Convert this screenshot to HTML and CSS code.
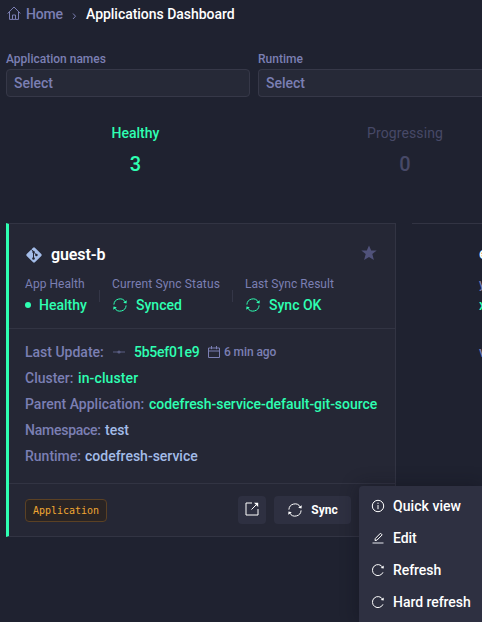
FILE: index.html
```html
<!DOCTYPE html>
<html lang="en">
<head>
<meta charset="utf-8">
<title>Applications Dashboard</title>
<link rel="stylesheet" href="styles.css">
</head>
<body>
<svg class="defs" aria-hidden="true">
  <symbol id="sync" viewBox="0 0 14 14"><path d="M.9 6.600A6.100 6.100 0 0 1 12.300 4M13.100 7.400A6.100 6.100 0 0 1 1.700 10"/><path class="head" d="m10.200 4.700 3.300.9.300-3.300zM3.800 9.300.5 8.400l-.3 3.300z"/></symbol>
  <symbol id="refresh" viewBox="0 0 14 14"><path d="M12 9.300a5.500 5.500 0 1 1-.3-5"/><path class="head" d="m9.700 4.900 3 .6V2.600z"/></symbol>
</svg>
<nav class="crumbs">
  <svg class="home" viewBox="0 0 14 14"><path d="M.6 7.500 7 1l6.400 6.500M2.500 6v7.400h9V6M5.500 13V9h3v4"/></svg>
  <a class="home-link">Home</a>
  <svg class="chevron" viewBox="0 0 5 8"><path d="m1 1.500 2.500 2.700L1 7"/></svg>
  <b class="current">Applications Dashboard</b>
</nav>
<section class="filters">
  <div class="field"><label>Application names</label><div class="select">Select</div></div>
  <div class="field"><label>Runtime</label><div class="select">Select</div></div>
</section>
<section class="stats">
  <div class="stat ok"><span>Healthy</span><b>3</b></div>
  <div class="stat off"><span>Progressing</span><b>0</b></div>
</section>
<main class="cards">
  <article class="card">
    <header class="top">
      <div class="title">
        <svg class="git" viewBox="0 0 16 16"><path class="gem" d="M8 .3q.5 0 .9.400l6.400 6.400q.8.900 0 1.800l-6.400 6.400q-.9.800-1.800 0L.7 8.900q-.8-.9 0-1.800L7.100.7Q7.500.3 8 .3z"/><path class="branch" d="M5.500 2.500 7.500 4.800v7M7.800 5.200l2.500 2.600"/><circle cx="7.500" cy="5" r="1.200"/><circle cx="10.400" cy="8" r="1.300"/><circle cx="7.500" cy="11.500" r="1.300"/></svg>
        <h2>guest-b</h2>
        <svg class="star" viewBox="0 0 16 16"><path d="m8 .5 2.200 5h5.500l-4.400 3.600 1.600 5.900L8 11.900 3.100 15l1.600-5.900L.3 5.500h5.500z"/></svg>
      </div>
      <div class="states">
        <div class="state s1"><span class="cap">App Health</span><div class="val"><i class="dot"></i><b>Healthy</b></div></div>
        <div class="state s2"><span class="cap wide">Current Sync Status</span><div class="val"><svg class="ic"><use href="#sync"/></svg><b>Synced</b></div></div>
        <div class="state s3"><span class="cap">Last Sync Result</span><div class="val"><svg class="ic"><use href="#sync"/></svg><b>Sync OK</b></div></div>
      </div>
    </header>
    <div class="details">
      <div class="row"><span class="key k1">Last Update:</span><svg class="commit" viewBox="0 0 12 6"><path d="M0 3h12"/><circle cx="6" cy="3" r="1.600"/></svg><b class="hash">5b5ef01e9</b><svg class="cal" viewBox="0 0 12 12"><path d="M.5 2h11v9.500H.5zM.5 5h11M3.500 0v3.200M8.500 0v3.200"/></svg><span class="ago">6 min ago</span></div>
      <div class="row"><span class="key k2">Cluster:</span><b class="v2">in-cluster</b></div>
      <div class="row"><span class="key k3">Parent Application:</span><b class="v3">codefresh-service-default-git-source</b></div>
      <div class="row"><span class="key k4">Namespace:</span><b class="plain">test</b></div>
      <div class="row"><span class="key k5">Runtime:</span><b class="plain">codefresh-service</b></div>
    </div>
    <footer class="foot">
      <span class="tag">Application</span>
      <button class="btn open"><svg viewBox="0 0 14 14"><path d="M7 1H1v12h12V7M6.500 7.500l5-5"/><path class="head" d="M9 .8h4.200V5z"/></svg></button>
      <button class="btn sync"><svg class="ic"><use href="#sync"/></svg><b>Sync</b></button>
    </footer>
  </article>
  <article class="next"><b class="n1">e</b><span class="n2">y</span><b class="n3">x</b><span class="n4">v</span></article>
</main>
<div class="menu">
  <div class="item"><svg viewBox="0 0 14 14"><circle cx="7" cy="7" r="5.700"/><path d="M7 6v4.200M7 3.700v1.200"/></svg><span class="m1">Quick view</span></div>
  <div class="item"><svg viewBox="0 0 14 14"><path d="M4 9.500 4.300 7.500 9.500 2.200l1.700 1.700L6 9.100z"/><path class="base" d="M1.500 12h11"/></svg><span>Edit</span></div>
  <div class="item"><svg><use href="#refresh"/></svg><span>Refresh</span></div>
  <div class="item"><svg><use href="#refresh"/></svg><span>Hard refresh</span></div>
</div>
</body>
</html>
```

FILE: styles.css
```css
* { box-sizing: border-box; }
html { overflow: hidden; }
body { margin: 0; width: 482px; height: 622px; overflow: hidden; position: relative; background: #1f2230; color: #7b7fb3; font: 500 14px/20px Roboto, sans-serif; white-space: nowrap; }
b, h2 { font-weight: 500; }
svg { fill: none; stroke: currentColor; flex: none; display: block; }
.head { fill: currentColor; stroke: none; }
.defs { width: 0; height: 0; position: absolute; }
.crumbs { height: 28px; padding-left: 7px; display: flex; align-items: center; }
.home { width: 14px; height: 14px; margin: -2px 5px 0 0; }
.home-link { width: 46px; letter-spacing: -.2px; }
.chevron { width: 5px; height: 8px; margin: 3px 9px 0 0; }
.current { color: #fff; letter-spacing: -.03px; }
.filters { display: flex; gap: 8px; padding: 21px 0 0 6px; }
.field { width: 244px; flex: none; }
.field label { display: block; height: 20px; font-size: 12px; }
.field:last-child { width: 224px; }
.field:last-child .select { border-right: 0; border-radius: 4px 0 0 4px; }
.select { height: 28px; border: 1px solid #363848; border-radius: 4px; background: #262937; padding: 3px 7px; }
.stats { display: flex; margin-left: 1px; padding-top: 26px; height: 126px; }
.stat { width: 269px; flex: none; display: flex; flex-direction: column; align-items: center; gap: 9px; }
.stat b { font-size: 20px; line-height: 24px; }
.stat.off { width: 212px; padding-left: 58px; }
.ok { color: #2effb2; }
.off { color: #474967; }
.off span { font-weight: 400; letter-spacing: .1px; }
.cards { display: flex; gap: 16px; margin-left: 6px; }
.card { width: 390px; height: 314px; flex: none; background: #252735; border: 1px solid #323443; border-left: 3px solid #2effb2; }
.top { height: 105px; border-bottom: 1px solid #323443; padding: 21px 18px 0 16px; }
.title { display: flex; height: 20px; align-items: center; }
.git { width: 16px; height: 16px; margin: -1px 9px 0 1px; stroke: none; }
.gem { fill: #a3bce8; }
.git circle { fill: #252735; }
.branch { stroke: #252735; }
.title h2 { margin: 0; color: #fff; font-size: 16px; font-weight: 600; letter-spacing: -.1px; }
.star { width: 16px; height: 16px; margin: -4px 0 0 auto; fill: #50527a; stroke: none; }
.states { display: flex; margin-top: 9px; }
.state { height: 43px; }
.cap { display: block; font-size: 12px; height: 20px; font-weight: 400; letter-spacing: .05px; }
.wide { letter-spacing: .14px; }
.s1 { width: 87px; }
.s2 { width: 133px; }
.val { display: flex; align-items: center; height: 22px; color: #2effb2; }
.dot { width: 6px; height: 6px; border-radius: 50%; background: currentColor; margin-right: 8px; }
.ic { width: 14px; height: 14px; margin: 0 9px 0 1px; }
.s1, .s2 { background: linear-gradient(#343647, #343647) no-repeat right 12px top 16px / 1px 12px; }
.details { padding: 10px 0 0 16px; height: 155px; border-bottom: 1px solid #323443; }
.row { height: 26px; display: flex; align-items: center; color: #2effb2; }
.key { color: #7b7fb3; margin-right: 4px; }
.k1 { width: 79px; margin-right: 9px; }
.k2 { width: 49px; }
.v2 { letter-spacing: .12px; }
.k3 { width: 120px; }
.v3 { letter-spacing: -.04px; }
.k4 { width: 76px; letter-spacing: -.25px; }
.k5 { width: 56px; }
.commit { width: 12px; height: 6px; color: #5b5e84; margin-right: 9px; }
.commit circle { fill: currentColor; stroke: none; }
.hash { width: 74px; letter-spacing: -.25px; }
.cal { width: 12px; height: 12px; margin-right: 4px; color: #7b7fb3; }
.ago { font-size: 12px; color: #7b7fb3; letter-spacing: -.1px; }
.plain { color: #a3bce8; }
.foot { display: flex; align-items: center; height: 52px; padding: 0 44px 0 16px; }
.tag { width: 82px; height: 23px; border: 1px solid #5b4124; border-radius: 4px; background: #292424; color: #f0a733; font: 10px/22px "DejaVu Sans Mono", monospace; text-align: center; margin-right: auto; }
.btn { height: 28px; border: 0; border-radius: 4px; background: #2e3041; color: #fff; padding: 0; font: 500 12px Roboto, sans-serif; display: flex; align-items: center; justify-content: center; }
.open { width: 28px; margin-right: 8px; }
.open svg { width: 14px; height: 14px; margin-top: -2px; }
.sync b { font-weight: 700; }
.sync { width: 77px; }
.next { width: 70px; height: 314px; flex: none; border-top: 1px solid #323443; padding: 20px 0 0 67px; overflow: hidden; display: flex; flex-direction: column; }
.n1 { color: #fff; height: 30px; font-size: 16px; }
.n2 { height: 21px; font-size: 12px; }
.n3 { color: #2effb2; height: 47px; }
.menu { position: absolute; left: 359px; top: 486px; width: 123px; height: 136px; padding-top: 4px; border-radius: 4px 0 0 0; background: #2e3041; color: #fff; box-shadow: 0 0 18px rgba(15, 16, 26, .45); }
.item { height: 32px; display: flex; align-items: center; padding-left: 12px; gap: 8px; letter-spacing: -.05px; }
.item .m1 { letter-spacing: .05px; }
.item svg { width: 14px; height: 14px; }
.base { stroke: #a9aab5; stroke-width: 1.500; }
```
